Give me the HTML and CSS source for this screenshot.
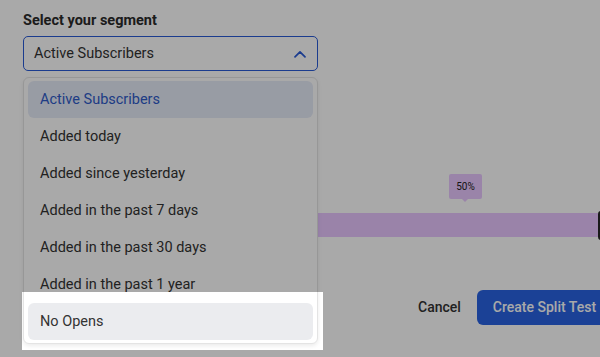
FILE: index.html
```html
<!DOCTYPE html>
<html lang="en">
<head>
<meta charset="utf-8">
<title>Split test segment</title>
<link rel="stylesheet" href="styles.css">
</head>
<body>
<div class="page">
  <div class="field">
    <div class="label">Select your segment</div>
    <div class="select">
      <span class="select-value">Active Subscribers</span>
      <svg class="chevron" width="12" height="8" viewBox="0 0 12 8"><path d="M1 6.8 L6 1.8 L11 6.8" fill="none" stroke="#2a5bd7" stroke-width="1.7" stroke-linecap="round" stroke-linejoin="round"/></svg>
    </div>
    <ul class="menu">
      <li class="item selected">Active Subscribers</li>
      <li class="item">Added today</li>
      <li class="item">Added since yesterday</li>
      <li class="item">Added in the past 7 days</li>
      <li class="item">Added in the past 30 days</li>
      <li class="item">Added in the past 1 year</li>
      <li class="item hovered">No Opens</li>
    </ul>
  </div>

  <div class="slider">
    <div class="tip-row"><span class="tip">50%</span></div>
    <div class="bar"><span class="thumb"></span></div>
  </div>

  <div class="actions">
    <span class="cancel">Cancel</span>
    <span class="primary">Create Split Test</span>
  </div>

  <div class="spotlight"></div>
</div>
</body>
</html>
```

FILE: styles.css
```css
html, body {
  margin: 0;
  padding: 0;
}
body {
  width: 600px;
  height: 357px;
  overflow: hidden;
  background: #ffffff;
  font-family: Roboto, "Liberation Sans", Arial, sans-serif;
  color: #333333;
}
.page {
  position: relative;
  width: 600px;
  height: 357px;
  padding-top: 13px;
  box-sizing: border-box;
}
.field {
  position: relative;
  margin-left: 23px;
  width: 295px;
}
.label {
  font-size: 14.5px;
  line-height: 16px;
  font-weight: 700;
  color: #2b2b2b;
}
.select {
  margin-top: 7px;
  height: 35px;
  box-sizing: border-box;
  border: 1px solid #2a5bd7;
  border-radius: 5px;
  display: flex;
  align-items: center;
  justify-content: space-between;
  padding: 0 11px 0 10px;
}
.select-value {
  font-size: 14.5px;
  color: #333333;
}
.chevron {
  display: block;
}
.menu {
  position: absolute;
  left: 0;
  top: 64px;
  width: 295px;
  box-sizing: border-box;
  margin: 0;
  padding: 3px 4px;
  list-style: none;
  background: #ffffff;
  border: 1px solid #e4e4e4;
  border-radius: 6px;
  box-shadow: 0 2px 4px rgba(0, 0, 0, 0.08);
  z-index: 2;
}
.item {
  height: 37px;
  line-height: 37px;
  padding-left: 12px;
  font-size: 14.5px;
  color: #333333;
  border-radius: 6px;
}
.item.selected {
  background: #e6ebf8;
  color: #2f5bc9;
}
.item.hovered {
  background: #ebecef;
}
.slider {
  margin-top: 103px;
  margin-left: 23px;
  width: 575px;
}
.tip-row {
  padding-left: 426px;
  height: 25px;
}
.tip {
  position: relative;
  display: inline-block;
  width: 33px;
  height: 25px;
  line-height: 25px;
  text-align: center;
  font-size: 10px;
  color: #222222;
  background: #e9c8ff;
  border-radius: 2px;
}
.tip::after {
  content: "";
  position: absolute;
  left: 13px;
  bottom: -3px;
  border-left: 3px solid transparent;
  border-right: 3px solid transparent;
  border-top: 3px solid #e9c8ff;
}
.bar {
  position: relative;
  margin-top: 14px;
  height: 24px;
  background: #e8c6ff;
}
.thumb {
  position: absolute;
  left: 575px;
  top: -2px;
  width: 14px;
  height: 29px;
  border-radius: 3px;
  background: #262626;
}
.actions {
  display: flex;
  align-items: center;
  gap: 16px;
  margin-top: 52px;
  padding-left: 418px;
  white-space: nowrap;
}
.cancel {
  font-size: 14px;
  font-weight: 500;
  color: #333333;
  line-height: 36px;
}
.primary {
  flex: none;
  height: 35px;
  line-height: 35px;
  padding: 0 16px;
  font-size: 14px;
  font-weight: 500;
  color: #ffffff;
  background: #2963e3;
  border-radius: 6px;
}
.spotlight {
  position: absolute;
  left: 22px;
  top: 292px;
  width: 301px;
  height: 58px;
  box-shadow: 0 0 0 2000px rgba(0, 0, 0, 0.337);
  z-index: 5;
}
```
